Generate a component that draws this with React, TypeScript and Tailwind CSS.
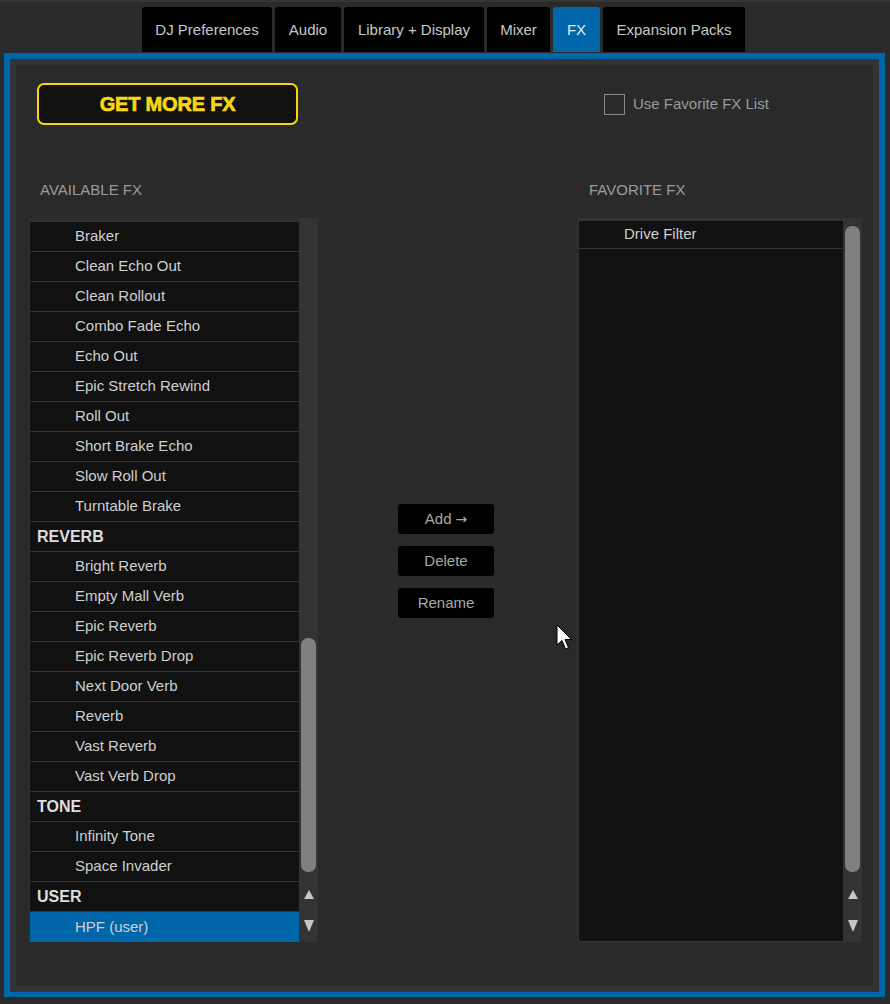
import React from "react";

type Row = { label: string; header?: boolean; selected?: boolean };

const tabs = [
  { label: "DJ Preferences", w: "w-[130px]" },
  { label: "Audio", w: "w-[66px]" },
  { label: "Library + Display", w: "w-[140px]" },
  { label: "Mixer", w: "w-[63px]" },
  { label: "FX", w: "w-[47px]", active: true },
  { label: "Expansion Packs", w: "w-[142px]" },
];

const available: Row[] = [
  { label: "Braker" },
  { label: "Clean Echo Out" },
  { label: "Clean Rollout" },
  { label: "Combo Fade Echo" },
  { label: "Echo Out" },
  { label: "Epic Stretch Rewind" },
  { label: "Roll Out" },
  { label: "Short Brake Echo" },
  { label: "Slow Roll Out" },
  { label: "Turntable Brake" },
  { label: "REVERB", header: true },
  { label: "Bright Reverb" },
  { label: "Empty Mall Verb" },
  { label: "Epic Reverb" },
  { label: "Epic Reverb Drop" },
  { label: "Next Door Verb" },
  { label: "Reverb" },
  { label: "Vast Reverb" },
  { label: "Vast Verb Drop" },
  { label: "TONE", header: true },
  { label: "Infinity Tone" },
  { label: "Space Invader" },
  { label: "USER", header: true },
  { label: "HPF (user)", selected: true },
];

function Arrows() {
  return (
    <div className="flex h-[70px] flex-col items-center">
      <svg width="10" height="9" viewBox="0 0 10 9" className="mt-[18px]">
        <polygon points="5,0 10,9 0,9" fill="#c3c7cb" />
      </svg>
      <svg width="10" height="12" viewBox="0 0 10 12" className="mt-[21px]">
        <polygon points="0,0 10,0 5,12" fill="#c3c7cb" />
      </svg>
    </div>
  );
}

function Scrollbar({ thumbTop, thumbHeight }: { thumbTop: string; thumbHeight: string }) {
  return (
    <div className="flex w-[19px] flex-col rounded-br-[2px] bg-[#333]">
      <div className="h-[654px] px-[2px]">
        <div className={`${thumbTop} ${thumbHeight} rounded-[7px] bg-[#808080]`} />
      </div>
      <Arrows />
    </div>
  );
}

function MidButton({ children }: { children: React.ReactNode }) {
  return (
    <div className="flex h-[30px] w-[96px] items-center justify-center rounded-[3px] bg-black text-[15px] text-[#a8a8a8]">
      {children}
    </div>
  );
}

export default function App() {
  return (
    <div
      className="relative h-[1004px] w-[890px] overflow-hidden bg-[#2a2a2a]"
      style={{ fontFamily: '"Liberation Sans", Arial, sans-serif' }}
    >
      <div className="h-[2px] bg-[#353535]" />
      <div className="flex gap-[3px] pl-[142px] pt-[5px]">
        {tabs.map((t) => (
          <div
            key={t.label}
            className={`${t.w} flex h-[45px] items-center justify-center rounded-t-[3px] pt-[2px] text-[15px] ${
              t.active ? "bg-[#0066aa] text-[#e8e8e8]" : "bg-black text-[#c8c8c8]"
            }`}
          >
            {t.label}
          </div>
        ))}
      </div>

      <div className="ml-[4px] mt-[1px] h-[944px] w-[881px] border-[6px] border-b-[5px] border-[#0066aa]">
        <div className="h-full border-[6px] border-[#333] bg-[#2a2a2a]">
          <div className="flex items-start pl-[21px] pt-[18px]">
            <div className="flex h-[42px] w-[261px] items-center justify-center rounded-[7px] border-2 border-[#f7d612] bg-[#111]">
              <span className="text-[20px] font-bold tracking-[-0.2px] text-[#f7d612] [-webkit-text-stroke:0.7px_#f7d612]">
                GET MORE FX
              </span>
            </div>
            <div className="ml-[306px] mt-[10px] flex items-center">
              <div className="h-[21px] w-[21px] border border-[#8a8a8a]" />
              <span className="ml-[8px] text-[15px] text-[#9a9a9a]">Use Favorite FX List</span>
            </div>
          </div>

          <div className="mt-[56px] flex items-start pl-[13px]">
            <div className="w-[289px]">
              <div className="h-[18px] pl-[11px] text-[15px] leading-[18px] text-[#9a9a9a]">AVAILABLE FX</div>
              <div className="mt-[19px] flex h-[724px]">
                <div className="flex-1 border-l border-t-[4px] border-[#2f2f2f] bg-[#111]">
                  {available.map((r) => (
                    <div
                      key={r.label}
                      className={`flex h-[30px] items-center border-b border-[#333] ${
                        r.header
                          ? "pl-[7px] text-[16px] font-bold text-[#dedede]"
                          : "pl-[45px] text-[15px] text-[#cfcfcf]"
                      } ${r.selected ? "border-b-0 bg-[#0066aa]" : ""}`}
                    >
                      {r.label}
                    </div>
                  ))}
                </div>
                <Scrollbar thumbTop="mt-[420px]" thumbHeight="h-[234px]" />
              </div>
            </div>

            <div className="ml-[80px] mt-[323px] flex flex-col gap-[12px]">
              <MidButton>
                Add{" "}
                <span className="ml-[4px]" style={{ fontFamily: '"DejaVu Sans", sans-serif', fontSize: "14px" }}>
                  →
                </span>
              </MidButton>
              <MidButton>Delete</MidButton>
              <MidButton>Rename</MidButton>
            </div>

            <div className="ml-[84px] w-[284px]">
              <div className="h-[18px] pl-[11px] text-[15px] leading-[18px] text-[#9a9a9a]">FAVORITE FX</div>
              <div className="mt-[19px] flex h-[724px]">
                <div className="flex-1 border-b border-l border-t-[3px] border-[#333] bg-[#111]">
                  <div className="flex h-[28px] items-center border-b border-[#333] pl-[45px] text-[15px] text-[#cfcfcf]">
                    Drive Filter
                  </div>
                </div>
                <Scrollbar thumbTop="mt-[8px]" thumbHeight="h-[646px]" />
              </div>
            </div>
          </div>
        </div>
      </div>

      <svg
        className="absolute left-[556px] top-[624px]"
        width="20"
        height="28"
        viewBox="0 0 20 28"
      >
        <path
          d="M1 1 L1 21 L6 16.5 L9.5 25 L12.5 23.8 L9 15.5 L15.5 15.5 Z"
          fill="#fff"
          stroke="#000"
          strokeWidth="1"
          strokeLinejoin="round"
        />
      </svg>
    </div>
  );
}
